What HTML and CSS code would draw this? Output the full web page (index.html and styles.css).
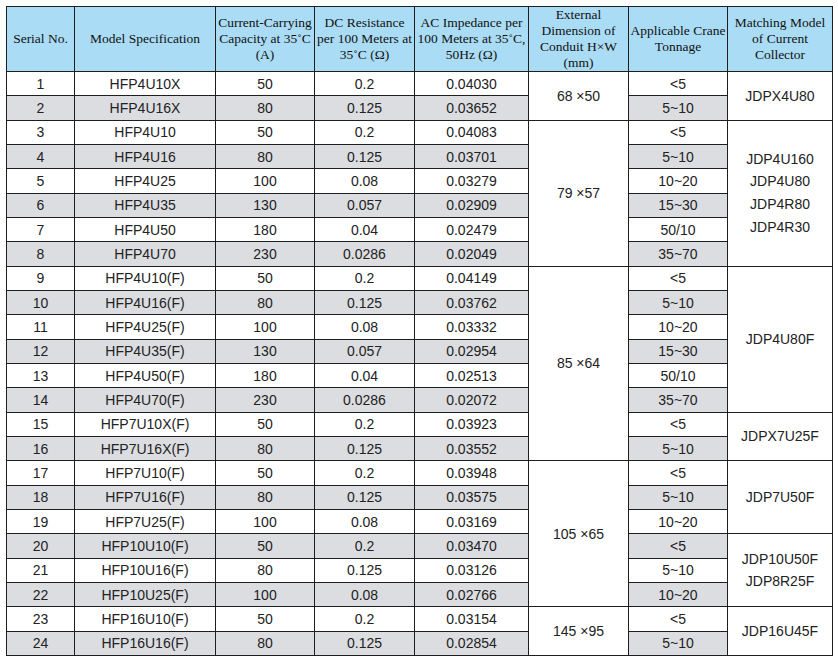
FILE: index.html
```html
<!DOCTYPE html>
<html>
<head>
<meta charset="utf-8">
<link rel="stylesheet" href="styles.css">
</head>
<body>
<table class="tbl">
<colgroup>
<col class="c1"><col class="c2"><col class="c3"><col class="c4"><col class="c5"><col class="c6"><col class="c7"><col class="c8">
</colgroup>
<thead>
<tr>
<th>Serial No.</th>
<th>Model Specification</th>
<th>Current-Carrying<br>Capacity at 35˚C<br>(A)</th>
<th>DC Resistance<br>per 100 Meters at<br>35˚C (Ω)</th>
<th>AC Impedance per<br>100 Meters at 35˚C,<br>50Hz (Ω)</th>
<th>External<br>Dimension of<br>Conduit H×W<br>(mm)</th>
<th>Applicable Crane<br>Tonnage</th>
<th>Matching Model<br>of Current<br>Collector</th>
</tr>
</thead>
<tbody>
<tr><td>1</td><td>HFP4U10X</td><td>50</td><td>0.2</td><td>0.04030</td><td class="m" rowspan="2">68 ×50</td><td>&lt;5</td><td class="m" rowspan="2">JDPX4U80</td></tr>
<tr class="even"><td>2</td><td>HFP4U16X</td><td>80</td><td>0.125</td><td>0.03652</td><td>5~10</td></tr>
<tr><td>3</td><td>HFP4U10</td><td>50</td><td>0.2</td><td>0.04083</td><td class="m" rowspan="6">79 ×57</td><td>&lt;5</td><td class="m multi" rowspan="6">JDP4U160<br>JDP4U80<br>JDP4R80<br>JDP4R30</td></tr>
<tr class="even"><td>4</td><td>HFP4U16</td><td>80</td><td>0.125</td><td>0.03701</td><td>5~10</td></tr>
<tr><td>5</td><td>HFP4U25</td><td>100</td><td>0.08</td><td>0.03279</td><td>10~20</td></tr>
<tr class="even"><td>6</td><td>HFP4U35</td><td>130</td><td>0.057</td><td>0.02909</td><td>15~30</td></tr>
<tr><td>7</td><td>HFP4U50</td><td>180</td><td>0.04</td><td>0.02479</td><td>50/10</td></tr>
<tr class="even"><td>8</td><td>HFP4U70</td><td>230</td><td>0.0286</td><td>0.02049</td><td>35~70</td></tr>
<tr><td>9</td><td>HFP4U10(F)</td><td>50</td><td>0.2</td><td>0.04149</td><td class="m" rowspan="8">85 ×64</td><td>&lt;5</td><td class="m" rowspan="6">JDP4U80F</td></tr>
<tr class="even"><td>10</td><td>HFP4U16(F)</td><td>80</td><td>0.125</td><td>0.03762</td><td>5~10</td></tr>
<tr><td>11</td><td>HFP4U25(F)</td><td>100</td><td>0.08</td><td>0.03332</td><td>10~20</td></tr>
<tr class="even"><td>12</td><td>HFP4U35(F)</td><td>130</td><td>0.057</td><td>0.02954</td><td>15~30</td></tr>
<tr><td>13</td><td>HFP4U50(F)</td><td>180</td><td>0.04</td><td>0.02513</td><td>50/10</td></tr>
<tr class="even"><td>14</td><td>HFP4U70(F)</td><td>230</td><td>0.0286</td><td>0.02072</td><td>35~70</td></tr>
<tr><td>15</td><td>HFP7U10X(F)</td><td>50</td><td>0.2</td><td>0.03923</td><td>&lt;5</td><td class="m" rowspan="2">JDPX7U25F</td></tr>
<tr class="even"><td>16</td><td>HFP7U16X(F)</td><td>80</td><td>0.125</td><td>0.03552</td><td>5~10</td></tr>
<tr><td>17</td><td>HFP7U10(F)</td><td>50</td><td>0.2</td><td>0.03948</td><td class="m" rowspan="6">105 ×65</td><td>&lt;5</td><td class="m" rowspan="3">JDP7U50F</td></tr>
<tr class="even"><td>18</td><td>HFP7U16(F)</td><td>80</td><td>0.125</td><td>0.03575</td><td>5~10</td></tr>
<tr><td>19</td><td>HFP7U25(F)</td><td>100</td><td>0.08</td><td>0.03169</td><td>10~20</td></tr>
<tr class="even"><td>20</td><td>HFP10U10(F)</td><td>50</td><td>0.2</td><td>0.03470</td><td>&lt;5</td><td class="m multi" rowspan="3">JDP10U50F<br>JDP8R25F</td></tr>
<tr><td>21</td><td>HFP10U16(F)</td><td>80</td><td>0.125</td><td>0.03126</td><td>5~10</td></tr>
<tr class="even"><td>22</td><td>HFP10U25(F)</td><td>100</td><td>0.08</td><td>0.02766</td><td>10~20</td></tr>
<tr><td>23</td><td>HFP16U10(F)</td><td>50</td><td>0.2</td><td>0.03154</td><td class="m" rowspan="2">145 ×95</td><td>&lt;5</td><td class="m" rowspan="2">JDP16U45F</td></tr>
<tr class="even"><td>24</td><td>HFP16U16(F)</td><td>80</td><td>0.125</td><td>0.02854</td><td>5~10</td></tr>
</tbody>
</table>
</body>
</html>
```
FILE: styles.css
```css
html, body {
  margin: 0;
  padding: 0;
  background: #ffffff;
}
body {
  padding: 6px;
}
.tbl {
  border-collapse: collapse;
  table-layout: fixed;
  width: 826px;
  font-family: "Liberation Sans", Arial, sans-serif;
  font-size: 14px;
  color: #222;
}
.c1 { width: 68px; }
.c2 { width: 141px; }
.c3 { width: 99px; }
.c4 { width: 100px; }
.c5 { width: 114px; }
.c6 { width: 100px; }
.c7 { width: 99px; }
.c8 { width: 105px; }
.tbl th,
.tbl td {
  border: 1px solid #1e1e1e;
  padding: 0;
  text-align: center;
  vertical-align: middle;
}
.tbl th {
  font-family: "Liberation Serif", "Times New Roman", serif;
  font-weight: normal;
  font-size: 13.5px;
  line-height: 16px;
  color: #111;
  background: #aadcf6;
  height: 64px;
  white-space: nowrap;
}
.tbl tbody tr {
  height: 24.33px;
}
.tbl td {
  line-height: 16px;
  white-space: nowrap;
  background: #ffffff;
}
.tbl tr.even td {
  background: #dcdde0;
}
.tbl tr td.m,
.tbl tr.even td.m {
  background: #ffffff;
}
.tbl td.multi {
  line-height: 22.7px;
}
```
